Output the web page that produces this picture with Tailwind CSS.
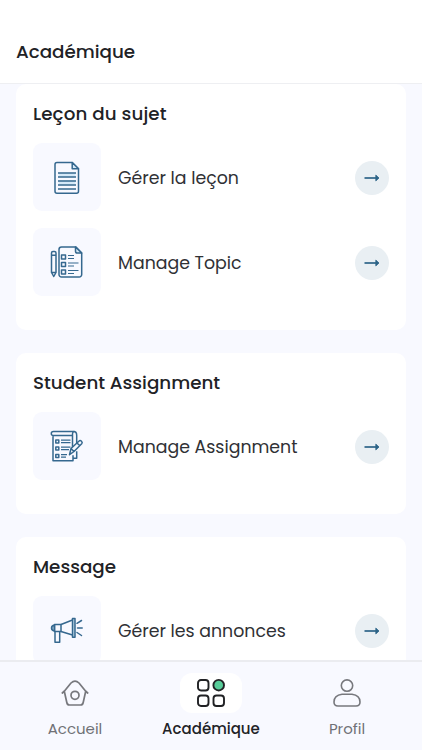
<!DOCTYPE html>
<html lang="fr">
<head>
<meta charset="utf-8">
<meta name="viewport" content="width=device-width, initial-scale=1">
<title>Académique</title>
<script src="https://cdn.jsdelivr.net/npm/@tailwindcss/browser@4"></script>
</head>
<body class="bg-[#f8f9ff]">
<svg class="hidden">
  <symbol id="arrow" viewBox="0 0 16 8"><path d="M0.5 4H12" stroke="#2d6488" stroke-width="1.700" fill="none"/><path d="M11.8 1.100 15 4 11.800 6.900Z" fill="#2d6488" stroke="#2d6488" stroke-width=".8" stroke-linejoin="round"/></symbol>
</svg>
<div class="flex h-[750px] w-[422px] flex-col overflow-hidden bg-[#f8f9ff] font-['Poppins','Inter',sans-serif] text-[#212226]">
  <header class="flex h-[84px] shrink-0 items-end border-b-[1.5px] border-[#eeeff2] bg-white px-[16px] pb-[17px]">
    <h1 class="text-[18.3px] leading-[28px] font-medium whitespace-nowrap">Académique</h1>
  </header>

  <main class="flex min-h-0 flex-1 flex-col gap-[23px] overflow-hidden px-4">
    <section class="shrink-0 rounded-[10px] bg-white px-[17px] pb-[34px]">
      <h2 class="flex h-[59px] items-center text-[18.3px] font-medium tracking-[0.1px] whitespace-nowrap">Leçon du sujet</h2>
      <div class="flex flex-col gap-[17px]">
        <div class="flex items-center">
          <div class="flex size-[68px] items-center justify-center rounded-[9px] bg-[#f8f9ff] pt-[2px]">
            <svg class="size-[34px]" viewBox="0 0 34 34" fill="none" stroke="#35688f" stroke-width="1.500" stroke-linejoin="round">
              <path d="M7 1.500h15.200l6.300 6.300v22.500a2 2 0 0 1-2 2H7a2 2 0 0 1-2-2V3.500a2 2 0 0 1 2-2Z"/>
              <path d="M22.200 1.500v6.300h6.300Z" fill="#d5e9f8"/>
              <path d="M8.500 12h17v4.200h-17zM8.500 19.500h17v4h-17z" fill="#d5e9f8" stroke="none"/>
              <path d="M8 12h18M8 16h18M8 20h18M8 24h18M8 28h18"/>
            </svg>
          </div>
          <span class="ml-[17px] flex-1 pt-[3px] text-[17.35px] whitespace-nowrap text-[#303135]">Gérer la leçon</span>
          <span class="mt-px flex size-[34px] items-center justify-center rounded-full bg-[#e9eff3]"><svg class="h-2 w-4"><use href="#arrow"/></svg></span>
        </div>
        <div class="flex items-center">
          <div class="flex size-[68px] items-center justify-center rounded-[9px] bg-[#f8f9ff] pt-[2px]">
            <svg class="size-[34px]" viewBox="0 0 34 34" fill="none" stroke="#35688f" stroke-width="1.500" stroke-linejoin="round">
              <path d="M11.500 1H26l5.700 6v21.500a2.500 2.500 0 0 1-2.500 2.500H11.500a2.500 2.500 0 0 1-2.500-2.500V3.500A2.500 2.500 0 0 1 11.500 1Z"/>
              <path d="M25.500 1v4.200q0 1.800 1.800 1.800h4.400Z" fill="#d5e9f8"/>
              <path d="M1.500 7q0-1.500 1.500-1.500h1.500Q6 5.500 6 7v19.500l-2.250 4-2.250-4ZM1.500 9.300H6M1.500 26.500H6"/>
              <path d="M11.500 9h4v4h-4zM11.500 16.500h4v4h-4zM11.500 24h4v4h-4z"/>
              <path d="M18 9.500h6M18 12.500h6M18 17h10.500M18 20h6M18 24.500h10.500M18 27.500h6" stroke-width="1.200"/>
            </svg>
          </div>
          <span class="ml-[17px] flex-1 pt-[3px] text-[17.35px] whitespace-nowrap text-[#303135]">Manage Topic</span>
          <span class="mt-px flex size-[34px] items-center justify-center rounded-full bg-[#e9eff3]"><svg class="h-2 w-4"><use href="#arrow"/></svg></span>
        </div>
      </div>
    </section>

    <section class="shrink-0 rounded-[10px] bg-white px-[17px] pb-[34px]">
      <h2 class="flex h-[59px] items-center text-[18.3px] font-medium whitespace-nowrap">Student Assignment</h2>
      <div class="flex items-center">
        <div class="flex size-[68px] items-center justify-center rounded-[9px] bg-[#f8f9ff] pt-[2px]">
          <svg class="size-[34px]" viewBox="0 0 34 34" fill="none" stroke="#35688f" stroke-width="1.500" stroke-linejoin="round">
            <path d="M22.500 5.500H3.500q-2.200 0-2.200-2t2.200-2h20q3.200 0 3.200 3.700v8.300M22.500 5.500q-.3-4 2-4M22.500 5.500v12M3 5.500v25.200h20v-5.500M23.300 28.200h3.400v-7"/>
            <path d="M21 18.500 28.800 11.200q1.300-1.300 2.700 0 1.300 1.300.2 2.600L24 21.500 19.500 24.700ZM27 13l2.800 2.700M21 18.500l3 3" fill="#f8f9ff"/>
            <path d="M5.800 10h3v3h-3zM5.800 17h3v3h-3zM5.800 24.500h3v3h-3z"/>
            <path d="M11 10.200h9.500M11 12.700h9.500M11 17.200h9.500M11 19.700h8M11 24.700h6M11 27.200h5" stroke-width="1.200"/>
          </svg>
        </div>
        <span class="ml-[17px] flex-1 pt-[3px] text-[17.35px] whitespace-nowrap text-[#303135]">Manage Assignment</span>
        <span class="mt-px flex size-[34px] items-center justify-center rounded-full bg-[#e9eff3]"><svg class="h-2 w-4"><use href="#arrow"/></svg></span>
      </div>
    </section>

    <section class="shrink-0 rounded-[10px] bg-white px-[17px] pb-[34px]">
      <h2 class="flex h-[59px] items-center text-[18.3px] font-medium whitespace-nowrap">Message</h2>
      <div class="flex items-center">
        <div class="flex size-[68px] items-center justify-center rounded-[9px] bg-[#f8f9ff] pt-[2px]">
          <svg class="size-[34px]" viewBox="0 0 34 34" fill="none" stroke="#35688f" stroke-width="1.500" stroke-linejoin="round">
            <path d="M4.500 10.500H11v7H4.500Z"/>
            <path d="M4.500 11q-3 .5-3 3t3 3Z" fill="#8eb1ca"/>
            <path d="M11 10.500 22.500 6M11 17.500 22.500 21"/>
            <path d="M22.500 4.500H25v18.700h-2.500Z" fill="#b9d3e5"/>
            <path d="M5 17.500V28.300H9.700V17.500"/>
            <path d="M27 9.300 31.500 6.500M27.500 14h4.700M27 18.500l4.500 3" stroke-linecap="round"/>
          </svg>
        </div>
        <span class="ml-[17px] flex-1 pt-[3px] text-[17.35px] whitespace-nowrap text-[#303135]">Gérer les annonces</span>
        <span class="mt-px flex size-[34px] items-center justify-center rounded-full bg-[#e9eff3]"><svg class="h-2 w-4"><use href="#arrow"/></svg></span>
      </div>
    </section>
  </main>

  <nav class="grid h-[90px] shrink-0 grid-cols-[150px_122px_150px] border-t-2 border-[#ebecf0] bg-[#f8f9ff] pt-[11px] text-[15px] text-[#707176]">
    <a class="flex flex-col items-center">
      <span class="flex h-10 items-center justify-center">
        <svg class="size-[30px]" viewBox="0 0 30 30" fill="none" stroke="#77787d" stroke-width="1.700" stroke-linecap="round" stroke-linejoin="round">
          <path d="M2.300 15 4.500 13 11 5Q15 1.300 19 5L25.500 13 27.700 15M4.300 13.300 6.800 24.500Q7.300 27 9.500 27H20.500Q22.700 27 23.200 24.500L25.700 13.300"/>
          <circle cx="15" cy="17.300" r="4"/>
        </svg>
      </span>
      <span class="mt-[4px] leading-6 whitespace-nowrap">Accueil</span>
    </a>
    <a class="flex flex-col items-center text-[#212226]">
      <span class="flex h-10 w-[62px] items-center justify-center rounded-[12px] bg-white">
        <svg class="size-[30px]" viewBox="0 0 30 30" fill="none" stroke="#202124" stroke-width="1.900">
          <rect x="2" y="2" width="10.500" height="10.500" rx="3"/>
          <circle cx="22.700" cy="7.200" r="5.300" fill="#57cc99"/>
          <rect x="2" y="17.500" width="10.500" height="10.500" rx="3"/>
          <rect x="17.500" y="17.500" width="10.500" height="10.500" rx="3"/>
        </svg>
      </span>
      <span class="mt-[4px] leading-6 font-medium whitespace-nowrap">Académique</span>
    </a>
    <a class="flex flex-col items-center">
      <span class="flex h-10 items-center justify-center">
        <svg class="size-[30px]" viewBox="0 0 30 30" fill="none" stroke="#77787d" stroke-width="1.600">
          <circle cx="15" cy="7.600" r="5.700"/>
          <path d="M10 16.300h10q8 1 8 7.700 0 4-4 4H6Q2 28 2 24q0-6.700 8-7.700Z"/>
        </svg>
      </span>
      <span class="mt-[4px] leading-6 whitespace-nowrap">Profil</span>
    </a>
  </nav>
</div>
</body>
</html>
